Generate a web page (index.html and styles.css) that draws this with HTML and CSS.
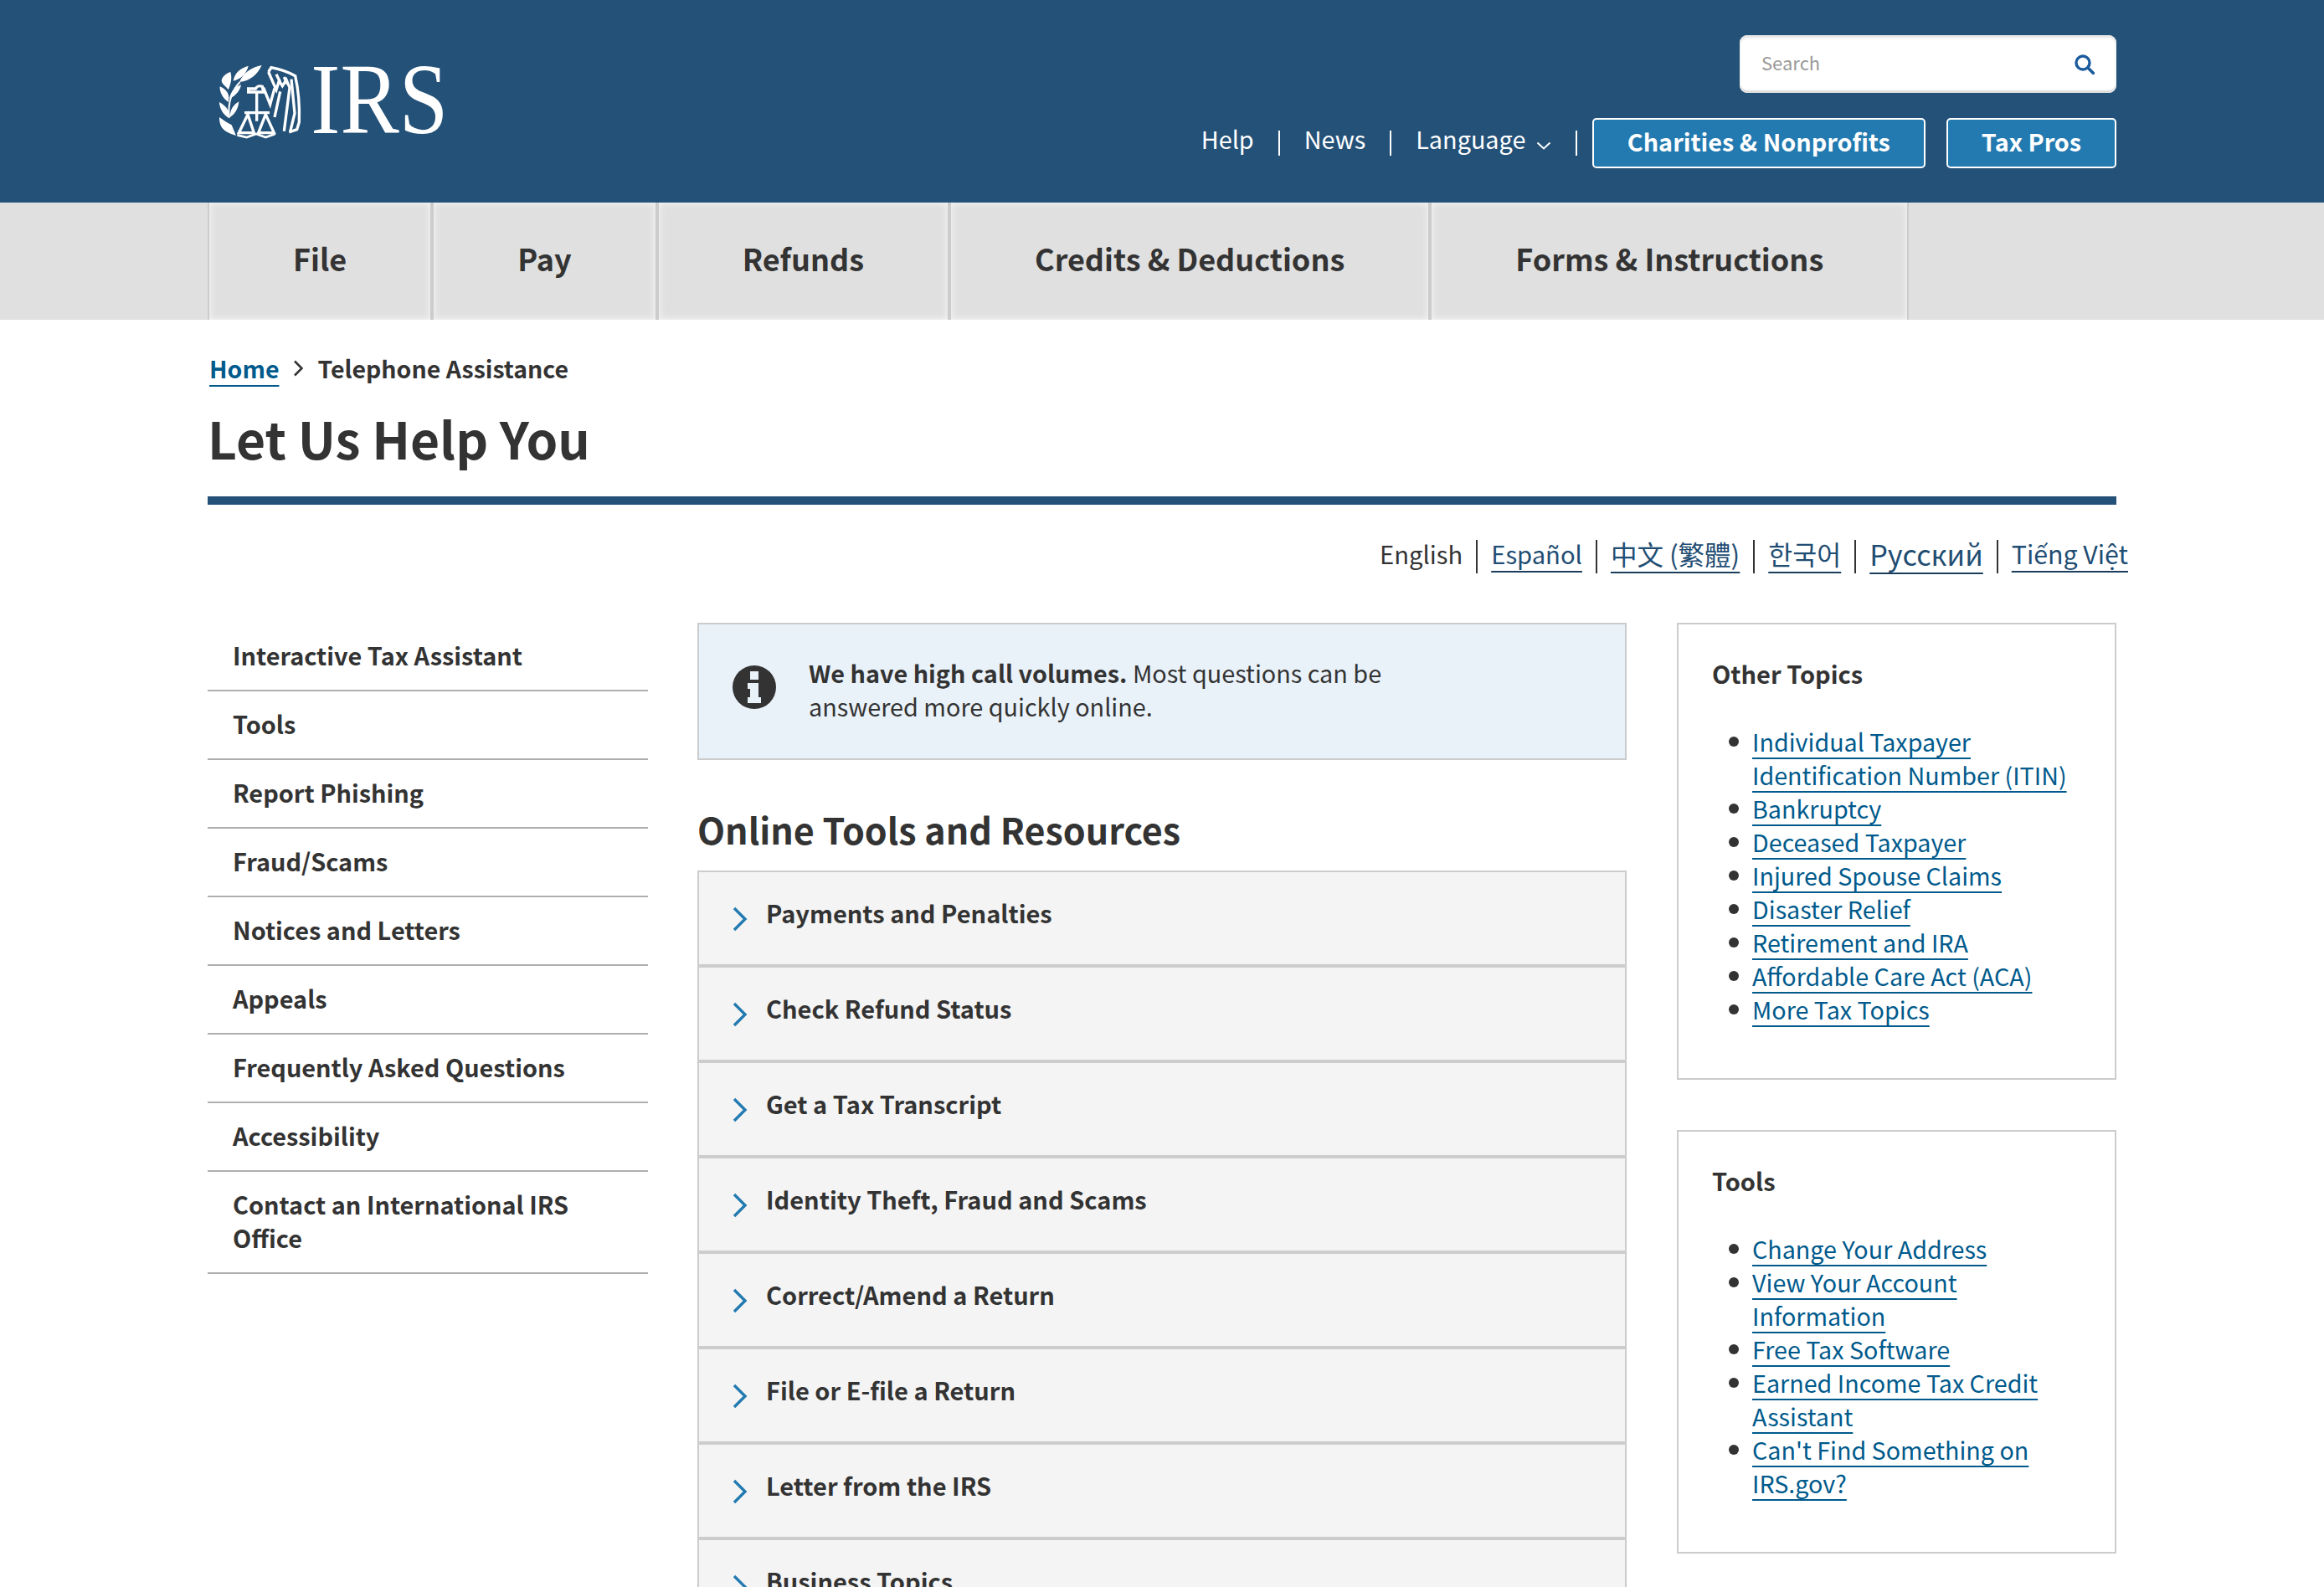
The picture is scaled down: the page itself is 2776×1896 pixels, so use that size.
FILE: index.html
```html
<!DOCTYPE html>
<html lang="en">
<head>
<meta charset="utf-8">
<title>Let Us Help You | Internal Revenue Service</title>
<link rel="stylesheet" href="styles.css">
</head>
<body>
<header class="site-header">
  <div class="wrap header-inner">
    <a class="logo" href="#" aria-label="IRS">
      <svg class="logo-svg" viewBox="0 0 870 300" width="290" height="100">
        <g fill="#fff">
          <path d="M90 78C102 46 134 24 170 18C154 52 128 74 90 78Z"/>
          <path d="M68 74C72 46 92 28 122 20C116 46 98 66 68 74Z"/>
          <path d="M58 42C40 48 28 60 26 72C26 86 42 92 50 106C60 84 64 62 58 42Z"/>
          <path d="M20 94C18 114 30 136 50 150C56 128 50 108 20 94Z"/>
          <path d="M96 88C76 94 58 112 54 138C76 128 92 110 96 88Z"/>
          <path d="M18 150C18 172 32 196 54 208C58 186 46 166 18 150Z"/>
          <path d="M88 148C70 158 56 176 56 204C76 192 86 172 88 148Z"/>
          <path d="M18 204C18 240 32 256 78 270L62 232C50 226 34 216 18 204Z"/>
        </g>
        <g fill="none" stroke="#fff" stroke-width="10">
          <path d="M92 78C66 104 46 150 54 206" stroke-width="6"/>
          <path d="M122 102H148C152 94 162 90 172 94L176 114H122Z"/>
          <path d="M152 114V218M108 188H198" stroke-width="10"/>
          <path d="M120 194L88 260H142ZM184 194L158 260H214Z"/>
          <path d="M82 268L116 276L150 264L184 276L218 264" stroke-width="8"/>
          <path d="M176 98L200 158L216 100"/>
          <path d="M194 42L204 26C236 32 268 44 290 56C300 100 306 170 304 222L296 248L268 258"/>
          <path d="M194 42L222 106L232 74L244 92L258 70L270 98L250 254"/>
          <path d="M222 50L236 78M250 60L262 86M276 68L288 190L272 256"/>
          <path d="M236 112L216 204"/>
        </g>
        <text class="logo-text" x="346" y="261" textLength="492" lengthAdjust="spacingAndGlyphs">IRS</text>
      </svg>
    </a>
    <div class="header-tools">
      <div class="search">
        <span class="search-text">Search</span>
        <svg class="search-icon" viewBox="0 0 24 24" width="24" height="24"><circle cx="10" cy="10" r="8" fill="none" stroke="#1b5a9c" stroke-width="3.4"/><path d="M16 16L22.5 22.5" stroke="#1b5a9c" stroke-width="3.6" stroke-linecap="round"/></svg>
      </div>
      <div class="utility">
        <ul class="util-links">
          <li><a href="#">Help</a></li>
          <li><a href="#">News</a></li>
          <li><a href="#">Language <svg class="util-caret" viewBox="0 0 18 10" width="18" height="10"><path d="M1.5 1.5L9 8.5L16.5 1.5" fill="none" stroke="#fff" stroke-width="2"/></svg></a></li>
        </ul>
        <a class="btn btn-charities" href="#">Charities &amp; Nonprofits</a>
        <a class="btn" href="#">Tax Pros</a>
      </div>
    </div>
  </div>
</header>

<nav class="main-nav">
  <div class="wrap">
    <ul class="tabs">
      <li class="tab">File</li>
      <li class="tab">Pay</li>
      <li class="tab">Refunds</li>
      <li class="tab">Credits &amp; Deductions</li>
      <li class="tab">Forms &amp; Instructions</li>
    </ul>
  </div>
</nav>

<div class="wrap page">
  <div class="breadcrumb">
    <a href="#">Home</a>
    <svg class="crumb-arrow" viewBox="0 0 12 20" width="12" height="20"><path d="M2 1.5L10.5 10L2 18.5" fill="none" stroke="#333" stroke-width="2.6"/></svg>
    <span>Telephone Assistance</span>
  </div>
  <h1 class="title">Let Us Help You</h1>

  <ul class="langs">
    <li>English</li>
    <li><a href="#">Español</a></li>
    <li class="lang-cjk"><a href="#">中文 (繁體)</a></li>
    <li class="lang-cjk"><a href="#">한국어</a></li>
    <li class="lang-ru"><a href="#">Русский</a></li>
    <li class="lang-vi"><a href="#">Tiếng Việt</a></li>
  </ul>

  <div class="columns">
    <ul class="sidebar">
      <li>Interactive Tax Assistant</li>
      <li>Tools</li>
      <li>Report Phishing</li>
      <li>Fraud/Scams</li>
      <li>Notices and Letters</li>
      <li>Appeals</li>
      <li>Frequently Asked Questions</li>
      <li>Accessibility</li>
      <li>Contact an International IRS<br>Office</li>
    </ul>

    <main class="content">
      <div class="alert">
        <svg class="alert-icon" viewBox="0 0 52 52" width="52" height="52"><circle cx="26" cy="26" r="26" fill="#333"/><path d="M21 7H31V17H21ZM18 21H31V38H34V45H18V38H21V28H18Z" fill="#eaf2f9"/></svg>
        <p class="alert-text"><strong>We have high call volumes.</strong> Most questions can be answered more quickly online.</p>
      </div>
      <h2 class="section-title">Online Tools and Resources</h2>
      <div class="accordion">
        <div class="acc-item"><svg class="acc-chev" viewBox="0 0 18 30" width="18" height="30"><path d="M2 2L15 15L2 28" fill="none" stroke="#227ab0" stroke-width="3.4"/></svg><span>Payments and Penalties</span></div>
        <div class="acc-item"><svg class="acc-chev" viewBox="0 0 18 30" width="18" height="30"><path d="M2 2L15 15L2 28" fill="none" stroke="#227ab0" stroke-width="3.4"/></svg><span>Check Refund Status</span></div>
        <div class="acc-item"><svg class="acc-chev" viewBox="0 0 18 30" width="18" height="30"><path d="M2 2L15 15L2 28" fill="none" stroke="#227ab0" stroke-width="3.4"/></svg><span>Get a Tax Transcript</span></div>
        <div class="acc-item"><svg class="acc-chev" viewBox="0 0 18 30" width="18" height="30"><path d="M2 2L15 15L2 28" fill="none" stroke="#227ab0" stroke-width="3.4"/></svg><span>Identity Theft, Fraud and Scams</span></div>
        <div class="acc-item"><svg class="acc-chev" viewBox="0 0 18 30" width="18" height="30"><path d="M2 2L15 15L2 28" fill="none" stroke="#227ab0" stroke-width="3.4"/></svg><span>Correct/Amend a Return</span></div>
        <div class="acc-item"><svg class="acc-chev" viewBox="0 0 18 30" width="18" height="30"><path d="M2 2L15 15L2 28" fill="none" stroke="#227ab0" stroke-width="3.4"/></svg><span>File or E-file a Return</span></div>
        <div class="acc-item"><svg class="acc-chev" viewBox="0 0 18 30" width="18" height="30"><path d="M2 2L15 15L2 28" fill="none" stroke="#227ab0" stroke-width="3.4"/></svg><span>Letter from the IRS</span></div>
        <div class="acc-item"><svg class="acc-chev" viewBox="0 0 18 30" width="18" height="30"><path d="M2 2L15 15L2 28" fill="none" stroke="#227ab0" stroke-width="3.4"/></svg><span>Business Topics</span></div>
      </div>
    </main>

    <aside class="aside">
      <section class="panel">
        <h3 class="panel-title">Other Topics</h3>
        <ul class="panel-list">
          <li><a href="#">Individual Taxpayer Identification Number (ITIN)</a></li>
          <li><a href="#">Bankruptcy</a></li>
          <li><a href="#">Deceased Taxpayer</a></li>
          <li><a href="#">Injured Spouse Claims</a></li>
          <li><a href="#">Disaster Relief</a></li>
          <li><a href="#">Retirement and IRA</a></li>
          <li><a href="#">Affordable Care Act (ACA)</a></li>
          <li><a href="#">More Tax Topics</a></li>
        </ul>
      </section>
      <section class="panel">
        <h3 class="panel-title">Tools</h3>
        <ul class="panel-list">
          <li><a href="#">Change Your Address</a></li>
          <li><a href="#">View Your Account Information</a></li>
          <li><a href="#">Free Tax Software</a></li>
          <li><a href="#">Earned Income Tax Credit Assistant</a></li>
          <li><a href="#">Can't Find Something on IRS.gov?</a></li>
        </ul>
      </section>
    </aside>
  </div>
</div>
</body>
</html>
```
FILE: styles.css
```css
* { box-sizing: border-box; }
html, body { height: 1896px; overflow: hidden; }
body {
  margin: 0;
  font-family: "Noto Sans CJK TC", "Noto Sans CJK KR", "Noto Sans", sans-serif;
  font-size: 28.8px;
  line-height: 40px;
  color: #333;
  background: #fff;
}
ul { list-style: none; margin: 0; padding: 0; }
a { color: inherit; text-decoration: none; }
.wrap { width: 2280px; margin: 0 auto; }

.site-header { height: 242px; background: #245178; }
.header-inner { display: flex; justify-content: space-between; }
.logo { display: block; margin: 72px 0 0 8px; height: 100px; }
.logo-svg { display: block; }
.logo-text { font-family: "Liberation Serif", serif; font-size: 360px; fill: #fff; }
.header-tools { display: flex; flex-direction: column; align-items: flex-end; padding-top: 42px; }
.search {
  width: 450px; height: 69px; background: #fff; border-radius: 9px;
  box-shadow: inset 0 3px 3px #e4e4e4, inset 0 -3px 2px #ddd;
  display: flex; align-items: center; justify-content: space-between;
  padding: 0 26px;
}
.search-text { font-size: 22px; color: #999; padding-bottom: 5px; }
.search-icon { display: block; }
.utility { display: flex; align-items: center; margin-top: 30px; color: #fff; }
.util-links { display: flex; align-items: center; margin-right: 18px; }
.util-links li { height: 30px; line-height: 20px; padding: 0 29px; border-right: 2px solid #fff; }
.util-caret { margin-left: 6px; vertical-align: -1px; }
.btn {
  display: block; height: 60px; line-height: 52px; padding: 0 40px;
  background: #227ab0; border: 2px solid #fff; border-radius: 5px;
  font-weight: 700; color: #fff;
}
.btn-charities { margin-right: 25px; }

.main-nav { height: 140px; background: #e0e0e0; }
.tabs { display: flex; height: 140px; border-left: 2px solid #ccc; width: max-content; }
.tab {
  display: flex; align-items: center; padding: 0 100px 8px;
  border-right: 4px solid #ccc; font-weight: 700; font-size: 36px;
  box-shadow: inset 0 0 8px #f8f8f8;
}
.tab:last-child { border-right-width: 2px; }

.page { padding-top: 39px; }
.breadcrumb { display: flex; align-items: center; height: 40px; padding-bottom: 2px; font-weight: 700; font-size: 28.5px; padding-left: 2px; }
.breadcrumb a { color: #005a8c; text-decoration: underline; text-decoration-thickness: 2px; text-underline-offset: 8px; }
.crumb-arrow { margin: 0 17px; }
.title { margin: 26px 0 0; font-size: 60.5px; line-height: 72px; font-weight: 700; padding-bottom: 34px; border-bottom: 10px solid #245178; }
.langs { display: flex; justify-content: flex-end; margin: 42px -14px 59px 0; line-height: 32px; }
.langs li { padding: 0 16px; border-left: 2px solid #333; height: 40px; font-size: 29.2px; }
.langs li:first-child { border-left: 0; }
.langs li:last-child { padding-right: 0; }
.langs a { color: #1f4d73; text-decoration: underline; text-decoration-color: #1b3d5c; text-decoration-thickness: 2px; text-underline-offset: 8px; text-decoration-skip-ink: none; }
.langs .lang-cjk { font-size: 31.5px; }
.langs .lang-ru { font-size: 34.2px; }
.langs .lang-vi { font-size: 30.3px; }

.columns { display: flex; align-items: flex-start; }
.sidebar { width: 526px; flex: none; font-weight: 700; font-size: 28.9px; }
.sidebar li { padding: 18px 28px 22px 30px; border-bottom: 2px solid #aeaeae; }

.content { width: 1110px; flex: none; margin-left: 59px; }
.alert {
  display: flex; align-items: flex-start; height: 164px;
  background: #eaf2f9; border: 2px solid #ccc; padding: 38px 0 0 40px;
}
.alert-icon { flex: none; margin: 11px 39px 0 0; }
.alert-text { margin: 0; width: 740px; }
.section-title { margin: 46px 0 0; font-size: 43px; line-height: 72px; font-weight: 700; padding-bottom: 14px; }
.acc-item {
  display: flex; align-items: flex-start; height: 114px;
  background: #f4f4f4; border: 2px solid #ccc;
  padding: 28px 0 0 40px; font-weight: 700; font-size: 29px;
}
.acc-chev { flex: none; margin: 13px 22px 0 0; }

.aside { width: 525px; flex: none; margin-left: 60px; }
.panel { border: 2px solid #ccc; padding: 38px 40px 0; height: 546px; margin-bottom: 60px; }
.panel + .panel { height: 506px; }
.panel-title { margin: 0 0 42px; font-size: 29px; line-height: 40px; font-weight: 700; }
.panel-list { padding-left: 48px; font-size: 28.7px; }
.panel-list li { position: relative; }
.panel-list li::before {
  content: ""; position: absolute; left: -28px; top: 14px;
  width: 12px; height: 12px; border-radius: 50%; background: #333;
}
.panel-list a { color: #005a8c; text-decoration: underline; text-decoration-thickness: 2px; text-underline-offset: 7px; text-decoration-skip-ink: none; }
```
